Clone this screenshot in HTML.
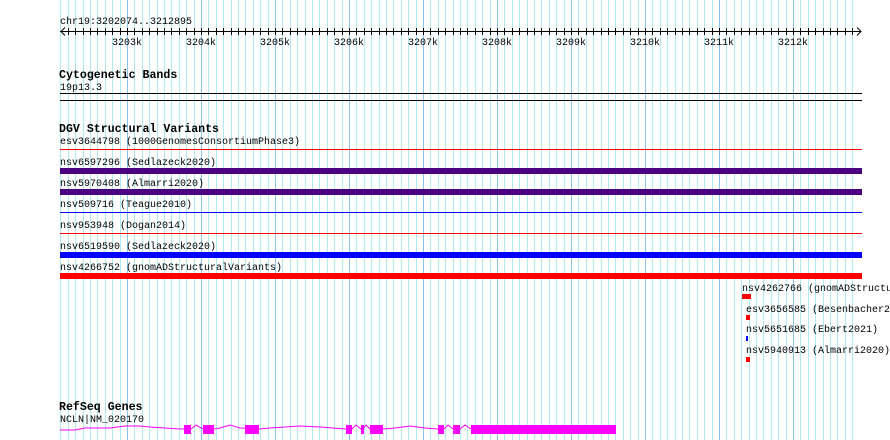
<!DOCTYPE html>
<html><head><meta charset="utf-8"><style>
html,body{margin:0;padding:0;background:#fff;}
svg{display:block;}
text{font-family:"Liberation Mono","DejaVu Sans Mono",monospace;font-size:10px;fill:#000;}
.b{font-weight:bold;font-size:11.6px;}
</style></head><body>
<svg width="890" height="440" viewBox="0 0 890 440" xmlns="http://www.w3.org/2000/svg" shape-rendering="crispEdges">
<path stroke="#b0eaf0" stroke-width="1" fill="none" d="M60.5 0v440M68.5 0v440M75.5 0v440M83.5 0v440M90.5 0v440M97.5 0v440M105.5 0v440M112.5 0v440M120.5 0v440
M134.5 0v440M142.5 0v440M149.5 0v440M157.5 0v440M164.5 0v440M171.5 0v440M179.5 0v440M186.5 0v440M194.5 0v440
M208.5 0v440M216.5 0v440M223.5 0v440M231.5 0v440M238.5 0v440M245.5 0v440M253.5 0v440M260.5 0v440M268.5 0v440
M282.5 0v440M290.5 0v440M297.5 0v440M305.5 0v440M312.5 0v440M319.5 0v440M327.5 0v440M334.5 0v440M342.5 0v440
M356.5 0v440M364.5 0v440M371.5 0v440M379.5 0v440M386.5 0v440M393.5 0v440M401.5 0v440M408.5 0v440M416.5 0v440
M430.5 0v440M438.5 0v440M445.5 0v440M453.5 0v440M460.5 0v440M467.5 0v440M475.5 0v440M482.5 0v440M490.5 0v440
M504.5 0v440M512.5 0v440M519.5 0v440M527.5 0v440M534.5 0v440M541.5 0v440M549.5 0v440M556.5 0v440M564.5 0v440
M578.5 0v440M586.5 0v440M593.5 0v440M601.5 0v440M608.5 0v440M615.5 0v440M623.5 0v440M630.5 0v440M638.5 0v440
M652.5 0v440M660.5 0v440M667.5 0v440M675.5 0v440M682.5 0v440M689.5 0v440M697.5 0v440M704.5 0v440M712.5 0v440
M726.5 0v440M734.5 0v440M741.5 0v440M749.5 0v440M756.5 0v440M763.5 0v440M771.5 0v440M778.5 0v440M786.5 0v440
M800.5 0v440M808.5 0v440M815.5 0v440M823.5 0v440M830.5 0v440M837.5 0v440M845.5 0v440M852.5 0v440"/>
<path stroke="#88c4ee" stroke-width="1" fill="none" d="M127.5 0v440M201.5 0v440M275.5 0v440M349.5 0v440M423.5 0v440M497.5 0v440M571.5 0v440M645.5 0v440M719.5 0v440M793.5 0v440"/>
<path stroke="#000" stroke-width="1" fill="none" d="M68.5 28v7M75.5 28v7M83.5 28v7M90.5 28v7M97.5 28v7M105.5 28v7M112.5 28v7M120.5 28v7M127.5 28v7
M134.5 28v7M142.5 28v7M149.5 28v7M157.5 28v7M164.5 28v7M171.5 28v7M179.5 28v7M186.5 28v7M194.5 28v7M201.5 28v7
M208.5 28v7M216.5 28v7M223.5 28v7M231.5 28v7M238.5 28v7M245.5 28v7M253.5 28v7M260.5 28v7M268.5 28v7M275.5 28v7
M282.5 28v7M290.5 28v7M297.5 28v7M305.5 28v7M312.5 28v7M319.5 28v7M327.5 28v7M334.5 28v7M342.5 28v7M349.5 28v7
M356.5 28v7M364.5 28v7M371.5 28v7M379.5 28v7M386.5 28v7M393.5 28v7M401.5 28v7M408.5 28v7M416.5 28v7M423.5 28v7
M430.5 28v7M438.5 28v7M445.5 28v7M453.5 28v7M460.5 28v7M467.5 28v7M475.5 28v7M482.5 28v7M490.5 28v7M497.5 28v7
M504.5 28v7M512.5 28v7M519.5 28v7M527.5 28v7M534.5 28v7M541.5 28v7M549.5 28v7M556.5 28v7M564.5 28v7M571.5 28v7
M578.5 28v7M586.5 28v7M593.5 28v7M601.5 28v7M608.5 28v7M615.5 28v7M623.5 28v7M630.5 28v7M638.5 28v7M645.5 28v7
M652.5 28v7M660.5 28v7M667.5 28v7M675.5 28v7M682.5 28v7M689.5 28v7M697.5 28v7M704.5 28v7M712.5 28v7M719.5 28v7
M726.5 28v7M734.5 28v7M741.5 28v7M749.5 28v7M756.5 28v7M763.5 28v7M771.5 28v7M778.5 28v7M786.5 28v7M793.5 28v7
M800.5 28v7M808.5 28v7M815.5 28v7M823.5 28v7M830.5 28v7M837.5 28v7M845.5 28v7M852.5 28v7"/>
<text x="60" y="24">chr19:3202074..3212895</text>
<line x1="60" y1="31.5" x2="861" y2="31.5" stroke="#000"/>
<polyline points="65,27.5 61,31.5 65,35.5" fill="none" stroke="#000" shape-rendering="auto"/>
<polyline points="857,27.5 861,31.5 857,35.5" fill="none" stroke="#000" shape-rendering="auto"/>
<text x="112" y="45">3203k</text><text x="186" y="45">3204k</text><text x="260" y="45">3205k</text>
<text x="334" y="45">3206k</text><text x="408" y="45">3207k</text><text x="482" y="45">3208k</text>
<text x="556" y="45">3209k</text><text x="630" y="45">3210k</text><text x="704" y="45">3211k</text>
<text x="778" y="45">3212k</text>
<text class="b" x="59" y="78">Cytogenetic Bands</text>
<text x="60" y="90">19p13.3</text>
<rect x="60" y="93" width="802" height="1" fill="#000"/>
<rect x="60" y="100" width="802" height="1" fill="#000"/>
<text class="b" x="59" y="132">DGV Structural Variants</text>
<text x="60" y="144">esv3644798 (1000GenomesConsortiumPhase3)</text>
<rect x="60" y="149" width="802" height="1" fill="#f00"/>
<text x="60" y="165">nsv6597296 (Sedlazeck2020)</text>
<rect x="60" y="168" width="802" height="6" fill="#4b0082"/>
<text x="60" y="186">nsv5970408 (Almarri2020)</text>
<rect x="60" y="189" width="802" height="6" fill="#4b0082"/>
<text x="60" y="207">nsv509716 (Teague2010)</text>
<rect x="60" y="212" width="802" height="1" fill="#00f"/>
<text x="60" y="228">nsv953948 (Dogan2014)</text>
<rect x="60" y="233" width="802" height="1" fill="#f00"/>
<text x="60" y="249">nsv6519590 (Sedlazeck2020)</text>
<rect x="60" y="252" width="802" height="6" fill="#00f"/>
<text x="60" y="270">nsv4266752 (gnomADStructuralVariants)</text>
<rect x="60" y="273" width="802" height="6" fill="#f00"/>
<text x="742" y="291">nsv4262766 (gnomADStructu</text>
<rect x="742" y="294" width="9" height="5" fill="#f00"/>
<text x="746" y="312">esv3656585 (Besenbacher2</text>
<rect x="746" y="315" width="4" height="5" fill="#f00"/>
<text x="746" y="332">nsv5651685 (Ebert2021)</text>
<rect x="746" y="336" width="2" height="5" fill="#00f"/>
<text x="746" y="353">nsv5940913 (Almarri2020)</text>
<rect x="746" y="357" width="4" height="5" fill="#f00"/>
<text class="b" x="59" y="410">RefSeq Genes</text>
<text x="60" y="422">NCLN|NM_020170</text>
<polyline shape-rendering="auto" points="60,430 75,430 85,428 110,428 125,426 140,426 150,427 180,429 191,429 196,425 203,429 214,429 220,428 230,425 240,428 259,429 270,428 300,426 320,427 346,429 352,429 356,425 361,429 363,429 366,425 370,429 383,429 395,428 410,426 425,428 438,429 444,429 448,425 453,429 460,429 465,425 471,429" fill="none" stroke="#f0f" stroke-width="1"/>
<g fill="#f0f">
<rect x="184" y="425" width="7" height="9"/><rect x="203" y="425" width="11" height="9"/>
<rect x="245" y="425" width="14" height="9"/><rect x="346" y="425" width="6" height="9"/>
<rect x="361" y="425" width="3" height="9"/><rect x="370" y="425" width="13" height="9"/>
<rect x="438" y="425" width="6" height="9"/><rect x="453" y="425" width="7" height="9"/>
<rect x="471" y="425" width="145" height="9"/>
</g>
</svg>
</body></html>
